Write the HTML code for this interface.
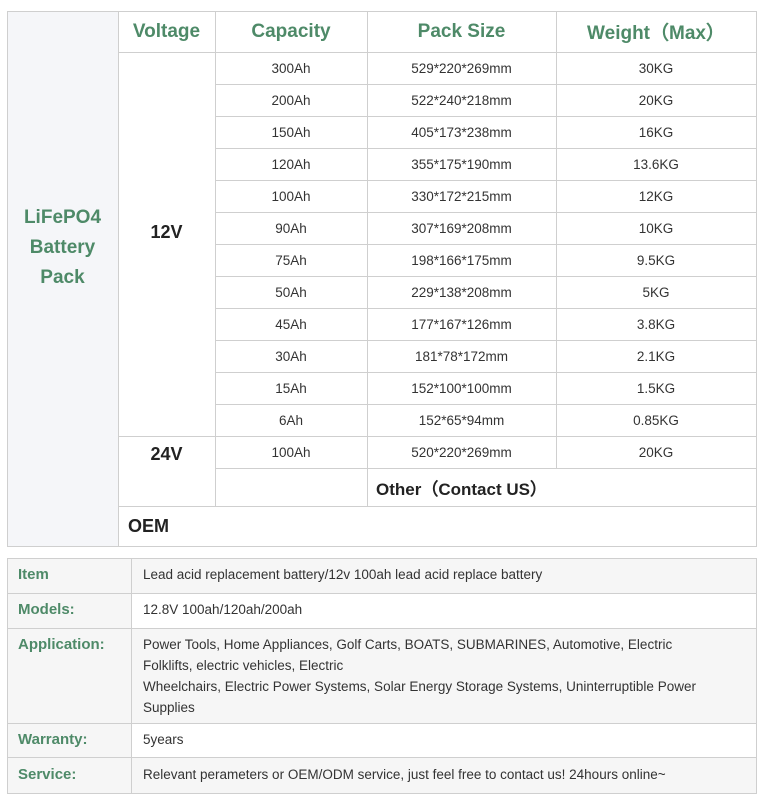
<!DOCTYPE html>
<html><head><meta charset="utf-8"><style>
body{margin:0;width:765px;height:801px;background:#fff;font-family:"Liberation Sans",Arial,sans-serif;position:relative;overflow:hidden}
.c{position:absolute;box-sizing:border-box;display:flex;align-items:center;justify-content:center;color:#333;font-size:13.5px}
.l{position:absolute;background:#cfcfcf}
.g{color:#4e8a68;font-weight:bold}
.h{font-size:19px}
.b{font-weight:bold;color:#222}
.t{position:absolute;color:#333;font-size:13.5px;line-height:21px}
</style></head><body>
<!-- table 1 -->
<div style="position:absolute;left:7px;top:11px;width:111px;height:536px;background:#f5f6f9"></div>
<div class="l" style="left:7px;top:11px;width:750px;height:1px"></div>
<div class="l" style="left:7px;top:546px;width:750px;height:1px"></div>
<div class="l" style="left:7px;top:11px;width:1px;height:536px"></div>
<div class="l" style="left:756px;top:11px;width:1px;height:536px"></div>
<div class="l" style="left:118px;top:11px;width:1px;height:536px"></div>
<div class="l" style="left:215px;top:11px;width:1px;height:495px"></div>
<div class="l" style="left:367px;top:11px;width:1px;height:495px"></div>
<div class="l" style="left:556px;top:11px;width:1px;height:457px"></div>
<div class="l" style="left:118px;top:52px;width:639px;height:1px"></div>
<div class="l" style="left:118px;top:436px;width:639px;height:1px"></div>
<div class="l" style="left:215px;top:468px;width:542px;height:1px"></div>
<div class="l" style="left:118px;top:506px;width:639px;height:1px"></div>
<div id="rl"></div>
<div class="c g h" style="left:118px;top:11px;width:97px;height:41px">Voltage</div>
<div class="c g h" style="left:215px;top:11px;width:152px;height:41px">Capacity</div>
<div class="c g h" style="left:367px;top:11px;width:189px;height:41px">Pack Size</div>
<div class="c g h" style="left:556px;top:11px;width:200px;height:41px">Weight（Max）</div>
<div class="c g" style="left:7px;top:200px;width:111px;height:95px;font-size:19px;line-height:30px;text-align:center">LiFePO4<br>Battery<br>Pack</div>
<div class="c b" style="left:118px;top:216px;width:97px;height:32px;font-size:18px">12V</div>
<div class="c b" style="left:118px;top:438px;width:97px;height:32px;font-size:18px">24V</div>
<div class="c b" style="left:367px;top:468px;width:189px;height:38px;font-size:17px;white-space:nowrap">Other（Contact US）</div>
<div class="c b" style="left:128px;top:506px;width:60px;height:40px;font-size:18px;justify-content:flex-start">OEM</div>
<div id="rows"></div>
<!-- table 2 -->
<div style="position:absolute;left:7px;top:558px;width:750px;height:36px;background:#f6f6f6"></div>
<div style="position:absolute;left:7px;top:628px;width:750px;height:95px;background:#f6f6f6"></div>
<div style="position:absolute;left:7px;top:757px;width:750px;height:37px;background:#f6f6f6"></div>
<div style="position:absolute;left:7px;top:558px;width:124px;height:236px;background:#f6f6f6"></div>
<div class="l" style="left:7px;top:558px;width:750px;height:1px"></div>
<div class="l" style="left:7px;top:593px;width:750px;height:1px"></div>
<div class="l" style="left:7px;top:628px;width:750px;height:1px"></div>
<div class="l" style="left:7px;top:723px;width:750px;height:1px"></div>
<div class="l" style="left:7px;top:757px;width:750px;height:1px"></div>
<div class="l" style="left:7px;top:793px;width:750px;height:1px"></div>
<div class="l" style="left:7px;top:558px;width:1px;height:236px"></div>
<div class="l" style="left:131px;top:558px;width:1px;height:236px"></div>
<div class="l" style="left:756px;top:558px;width:1px;height:236px"></div>
<div class="t g" style="left:18px;top:564px;font-size:15px;color:#4e8a68">Item</div>
<div class="t g" style="left:18px;top:599px;font-size:15px;color:#4e8a68">Models:</div>
<div class="t g" style="left:18px;top:634px;font-size:15px;color:#4e8a68">Application:</div>
<div class="t g" style="left:18px;top:729px;font-size:15px;color:#4e8a68">Warranty:</div>
<div class="t g" style="left:18px;top:764px;font-size:15px;color:#4e8a68">Service:</div>
<div class="t" style="left:143px;top:564px">Lead acid replacement battery/12v 100ah lead acid replace battery</div>
<div class="t" style="left:143px;top:599px">12.8V 100ah/120ah/200ah</div>
<div class="t" style="left:143px;top:634px;width:600px">Power Tools, Home Appliances, Golf Carts, BOATS, SUBMARINES, Automotive, Electric<br>Folklifts, electric vehicles, Electric<br>Wheelchairs, Electric Power Systems, Solar Energy Storage Systems, Uninterruptible Power<br>Supplies</div>
<div class="t" style="left:143px;top:729px">5years</div>
<div class="t" style="left:143px;top:764px">Relevant perameters or OEM/ODM service, just feel free to contact us! 24hours online~</div>
<script>
var d=[["300Ah","529*220*269mm","30KG"],["200Ah","522*240*218mm","20KG"],["150Ah","405*173*238mm","16KG"],["120Ah","355*175*190mm","13.6KG"],["100Ah","330*172*215mm","12KG"],["90Ah","307*169*208mm","10KG"],["75Ah","198*166*175mm","9.5KG"],["50Ah","229*138*208mm","5KG"],["45Ah","177*167*126mm","3.8KG"],["30Ah","181*78*172mm","2.1KG"],["15Ah","152*100*100mm","1.5KG"],["6Ah","152*65*94mm","0.85KG"],["100Ah","520*220*269mm","20KG"]];
var h="";
d.forEach(function(r,i){var y=52+i*32;
if(i>0&&i<12)h+='<div class="l" style="left:215px;top:'+y+'px;width:542px;height:1px"></div>';
h+='<div class="c" style="left:215px;top:'+y+'px;width:152px;height:32px">'+r[0]+'</div>';
h+='<div class="c" style="left:367px;top:'+y+'px;width:189px;height:32px">'+r[1]+'</div>';
h+='<div class="c" style="left:556px;top:'+y+'px;width:200px;height:32px">'+r[2]+'</div>';});
document.getElementById("rows").outerHTML=h;
</script>
</body></html>
